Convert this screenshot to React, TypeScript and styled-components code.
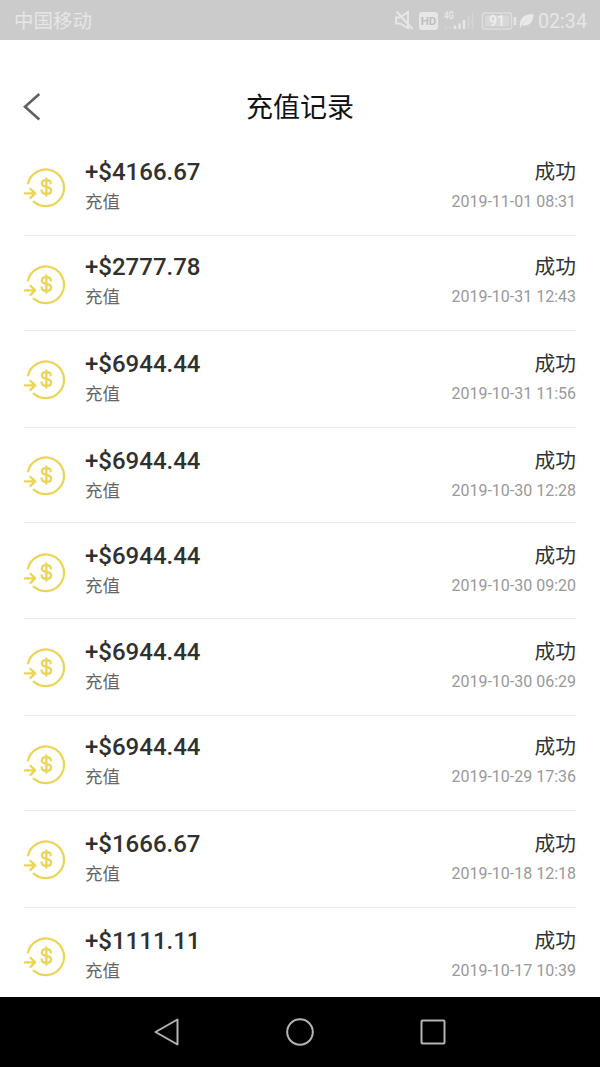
import React from 'react';
import styled, { createGlobalStyle } from 'styled-components';

const GlobalStyle = createGlobalStyle`
  * { box-sizing: border-box; }
  body {
    margin: 0;
    background: #fff;
    font-family: Roboto, "Noto Sans CJK SC", sans-serif;
  }
`;

const Screen = styled.main`
  width: 600px;
  height: 1067px;
  display: flex;
  flex-direction: column;
  overflow: hidden;
  background: #fff;
`;

const StatusBar = styled.div`
  height: 40px;
  flex: none;
  display: flex;
  align-items: center;
  justify-content: space-between;
  padding: 1px 13px 0 14px;
  background: #cbcbcb;
  color: #e6e6e6;
`;

const Carrier = styled.span`
  padding-top: 2px;
  font-size: 19.5px;
  line-height: 28px;
`;

const StatusItems = styled.div`
  display: flex;
  align-items: center;
`;

const StatusIcons = styled.svg`
  display: block;
  width: 144px;
  height: 28px;
`;

const Clock = styled.span`
  padding-top: 2px;
  font-size: 19.7px;
  line-height: 28px;
`;

const Header = styled.header`
  height: 100px;
  flex: none;
  display: grid;
  grid-template-columns: 60px 1fr 60px;
  align-items: center;
  padding-top: 33px;
`;

const BackButton = styled.button`
  display: flex;
  width: 60px;
  height: 40px;
  padding: 0 0 0 22px;
  align-items: center;
  border: 0;
  background: none;
`;

const Title = styled.h1`
  margin: 0;
  padding-top: 2px;
  font-size: 27px;
  line-height: 40px;
  font-weight: 400;
  text-align: center;
  color: #111;
`;

const List = styled.ul`
  flex: 1;
  min-height: 0;
  margin: 0;
  padding: 0 24px;
  list-style: none;
  overflow: hidden;
`;

const Row = styled.li<{ $height: number }>`
  height: ${(p) => p.$height}px;
  display: flex;
  align-items: flex-start;
  border-bottom: 1px solid #e9e9e9;
  &:last-child { border-bottom: 0; }
`;

const IconSlot = styled.div<{ $top: number }>`
  width: 61px;
  padding-top: ${(p) => p.$top}px;
  svg { display: block; }
`;

const Column = styled.div<{ $top: number; $end?: boolean }>`
  flex: 1;
  display: flex;
  flex-direction: column;
  align-items: ${(p) => (p.$end ? 'flex-end' : 'flex-start')};
  padding-top: ${(p) => p.$top}px;
`;

const Amount = styled.span`
  font-size: 24px;
  line-height: 30px;
  font-weight: 500;
  color: #303030;
`;

const Kind = styled.span`
  font-size: 17.5px;
  line-height: 31px;
  color: #666;
`;

const State = styled.span`
  font-size: 20.7px;
  line-height: 30px;
  color: #333;
`;

const Time = styled.time`
  font-size: 16px;
  line-height: 30px;
  color: #999;
`;

const NavBar = styled.nav`
  height: 70px;
  flex: none;
  display: flex;
  align-items: center;
  justify-content: center;
  gap: 101px;
  background: #000;
`;

const NavIcon = styled.svg`
  width: 32px;
  height: 32px;
  fill: none;
  stroke: #b4b4b4;
  stroke-width: 2;
  stroke-linejoin: round;
`;

const RechargeIcon = () => (
  <svg width="44" height="42" viewBox="0 0 44 42" fill="none" stroke="#ecd455" strokeWidth="2.3" strokeLinecap="round" strokeLinejoin="round">
    <path d="M4 16.3A18.3 18.3 0 1 1 9.8 34.7" />
    <path d="M0.5 26.3H11M6.5 21.8L11.2 26.3L6.5 30.8" />
    <path d="M26.9 16.4C26.8 14.2 25.1 13.2 22.4 13.2C19.7 13.2 17.8 14.4 17.8 16.4C17.8 18.7 19.8 19.3 22.4 19.9C25.2 20.5 27.2 21.2 27.2 23.5C27.2 25.7 25.3 26.9 22.4 26.9C19.6 26.9 17.6 25.7 17.6 23.3M22.4 11.4V28.7" />
  </svg>
);

type Item = { amount: string; time: string; height: number; text: number; icon: number };

const items: Item[] = [
  { amount: '4166.67', time: '2019-11-01 08:31', height: 96, text: 17, icon: 27 },
  { amount: '2777.78', time: '2019-10-31 12:43', height: 95, text: 16, icon: 28 },
  { amount: '6944.44', time: '2019-10-31 11:56', height: 97, text: 18, icon: 28 },
  { amount: '6944.44', time: '2019-10-30 12:28', height: 95, text: 18, icon: 27 },
  { amount: '6944.44', time: '2019-10-30 09:20', height: 96, text: 18, icon: 29 },
  { amount: '6944.44', time: '2019-10-30 06:29', height: 97, text: 18, icon: 28 },
  { amount: '6944.44', time: '2019-10-29 17:36', height: 95, text: 16, icon: 28 },
  { amount: '1666.67', time: '2019-10-18 12:18', height: 97, text: 18, icon: 28 },
  { amount: '1111.11', time: '2019-10-17 10:39', height: 89, text: 18, icon: 28 },
];

export default function App() {
  return (
    <Screen>
      <GlobalStyle />
      <StatusBar>
        <Carrier>中国移动</Carrier>
        <StatusItems>
          <StatusIcons viewBox="0 0 144 28" fill="none" stroke="#e6e6e6" strokeWidth="1.5">
            <path d="M2 10.5H6L14 5V21L6 16.5H2ZM2.5 4.5L18.5 22" strokeWidth="2" />
            <rect x="25" y="5" width="19" height="18" rx="3" fill="#e6e6e6" stroke="none" />
            <text x="34.5" y="18" textAnchor="middle" fontSize="11.5" fontWeight="600" fill="#bdbdbd" stroke="none">HD</text>
            <text x="50" y="12" fontSize="10" fontWeight="700" fill="#e6e6e6" stroke="none" textLength="10" lengthAdjust="spacingAndGlyphs">4G</text>
            <path d="M61 22V18.5M65.5 22V16.5M70 22V13" strokeWidth="2.5" />
            <path d="M74.5 22V9M78.5 22V5M52 22V19M56 22V19" stroke="#d5d5d5" />
            <rect x="88.5" y="6" width="29" height="16" rx="2" stroke="#dedede" />
            <rect x="91" y="8.5" width="24" height="11" fill="#d7d7d7" stroke="none" />
            <text x="103" y="19" textAnchor="middle" fontSize="14" fontWeight="600" fill="#eeeeee" stroke="none">91</text>
            <path d="M121 10V18" strokeWidth="2.5" />
            <path d="M126 21C125 11 130 7 139.5 7C139.5 16 134 20 128 18L126 21Z" fill="#e9e9e9" stroke="none" />
            <path d="M127.5 18L133 13" stroke="#d2d2d2" strokeWidth="0.7" />
          </StatusIcons>
          <Clock>02:34</Clock>
        </StatusItems>
      </StatusBar>
      <Header>
        <BackButton aria-label="返回">
          <svg width="20" height="30" viewBox="0 0 20 30" fill="none" stroke="#606060" strokeWidth="2.6">
            <path d="M17.3 2L3 14.7L17.3 27.5" />
          </svg>
        </BackButton>
        <Title>充值记录</Title>
      </Header>
      <List>
        {items.map((item) => (
          <Row key={item.time} $height={item.height}>
            <IconSlot $top={item.icon}><RechargeIcon /></IconSlot>
            <Column $top={item.text}>
              <Amount>+${item.amount}</Amount>
              <Kind>充值</Kind>
            </Column>
            <Column $top={item.text} $end>
              <State>成功</State>
              <Time>{item.time}</Time>
            </Column>
          </Row>
        ))}
      </List>
      <NavBar>
        <NavIcon viewBox="0 0 32 32"><path d="M26.5 3.5V28.5L4.5 16Z" /></NavIcon>
        <NavIcon viewBox="0 0 32 32"><circle cx="16" cy="16" r="12.8" /></NavIcon>
        <NavIcon viewBox="0 0 32 32"><rect x="4.5" y="4.5" width="23" height="23" rx="1" /></NavIcon>
      </NavBar>
    </Screen>
  );
}
